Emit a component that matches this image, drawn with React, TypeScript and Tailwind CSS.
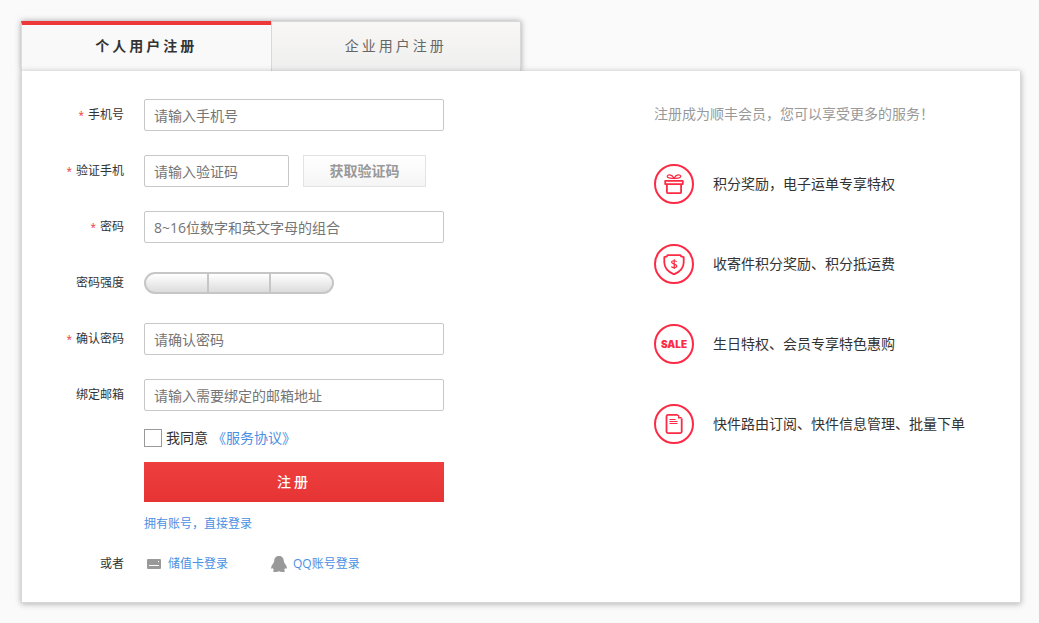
import type { ReactNode } from "react";

const fieldClass =
  "h-8 w-full rounded-[2px] border border-[#c8c8c8] bg-white px-[9px] text-sm text-[#333] outline-none placeholder:text-[#757575] placeholder:opacity-100 focus:border-[#999]";

const linkClass = "text-[#4a90e2] hover:underline";

type RowProps = {
  label: string;
  htmlFor?: string;
  required?: boolean;
  children: ReactNode;
};

function Row({ label, htmlFor, required, children }: RowProps) {
  return (
    <div className="flex h-8 items-center gap-5">
      <label
        htmlFor={htmlFor}
        className="w-[102px] shrink-0 text-right text-xs text-[#333]"
      >
        {required && <span className="mr-1 text-[10px] text-[#f0323c]">*</span>}
        {label}
      </label>
      {children}
    </div>
  );
}

function GiftIcon() {
  return (
    <svg viewBox="0 0 20 20" className="size-5" fill="none" stroke="#fc2a44">
      <path strokeWidth="1.2" d="M10 4.2C8 4.4 3.4 4.6 3.2 2.4 3.3.2 7.8 0 10 4.2C12.200 0 16.700.2 16.800 2.400 16.600 4.600 12 4.400 10 4.200" />
      <path strokeWidth="1.800" strokeLinejoin="round" d="M1.200 6.900h17.600v3.200H1.200zM2.900 10.300v7.900q0 .900.900.900h12.400q.900 0 .900-.900v-7.900" />
    </svg>
  );
}

function ShieldIcon() {
  return (
    <svg viewBox="0 0 22 22" className="size-[22px]" fill="none" stroke="#fc2a44">
      <path
        strokeWidth="1.800"
        strokeLinejoin="round"
        d="M4.500 2.100h13l.600 1.200 2.600.900v5.200c0 5.500-4.600 9.600-9.700 12C5.900 19 1.300 14.900 1.300 9.400V4.200l2.600-.900z"
      />
      <path
        strokeWidth="1.200"
        d="M13.600 8.900C13 7.400 8.600 7.200 8.600 9.300c0 2.200 5.200 1.400 5.200 3.800 0 2.100-4.700 2-5.400.400M11.200 6.300v9.800"
      />
    </svg>
  );
}

function DocumentIcon() {
  return (
    <svg viewBox="0 0 20 22" className="h-[22px] w-5" fill="none" stroke="#fc2a44">
      <path
        strokeWidth="1.800"
        strokeLinejoin="round"
        d="M13.500 1.900H4q-1.500 0-1.500 1.500v15.200q0 1.500 1.500 1.500h12.200q1.500 0 1.500-1.500V5.500"
      />
      <path strokeWidth="1.200" d="M5.500 6.500h6M5.500 8.500h8M5.500 10.500h8" />
      <path strokeWidth="1.400" d="M13.300 1.900l1.400.900v2h3" />
    </svg>
  );
}

const benefits: { text: string; icon: ReactNode }[] = [
  { text: "积分奖励，电子运单专享特权", icon: <GiftIcon /> },
  { text: "收寄件积分奖励、积分抵运费", icon: <ShieldIcon /> },
  {
    text: "生日特权、会员专享特色惠购",
    icon: (
      <span className="font-[Inter,sans-serif] text-[10px] leading-none font-black text-[#fc2a44]">
        SALE
      </span>
    ),
  },
  { text: "快件路由订阅、快件信息管理、批量下单", icon: <DocumentIcon /> },
];

export default function App() {
  return (
    <main
      lang="zh-CN"
      className="min-h-screen bg-[#fafafa] pt-[21px] pr-[18px] pb-[18px] pl-[21px] font-['Open_Sans','Noto_Sans_CJK_SC',sans-serif] text-[#333]"
    >
      <div
        role="tablist"
        className="flex w-[500px] max-w-full shadow-[0_0_6px_rgba(0,0,0,0.35)]"
      >
        <button
          type="button"
          role="tab"
          aria-selected="true"
          className="h-[50px] flex-1 border-t-4 border-l border-t-[#ec3838] border-l-[#ddd] bg-[#f9f9f9] pb-[5px] text-sm font-bold tracking-[3px] text-[#333]"
        >
          个人用户注册
        </button>
        <button
          type="button"
          role="tab"
          aria-selected="false"
          className="h-[50px] flex-1 border border-b-0 border-[#d8d8d8] bg-linear-to-b from-[#f8f7f5] to-[#efefef] pb-[2px] text-sm tracking-[3px] text-[#666]"
        >
          企业用户注册
        </button>
      </div>

      <section className="relative grid grid-cols-[minmax(0,632px)_1fr] border border-t-0 border-[#d8d8d8] bg-white pt-7 pb-7 shadow-[0_1px_6px_rgba(0,0,0,0.3)]">
        <form onSubmit={(e) => e.preventDefault()}>
          <div className="flex flex-col gap-6">
            <Row label="手机号" htmlFor="phone" required>
              <div className="w-[300px]">
                <input id="phone" type="tel" placeholder="请输入手机号" className={fieldClass} />
              </div>
            </Row>
            <Row label="验证手机" htmlFor="code" required>
              <div className="flex gap-[14px]">
                <div className="w-[145px]">
                  <input id="code" type="text" placeholder="请输入验证码" className={fieldClass} />
                </div>
                <button
                  type="button"
                  className="h-8 w-[123px] border border-[#e3e3e3] bg-linear-to-b from-white to-[#f5f5f5] text-sm font-bold text-[#999]"
                >
                  获取验证码
                </button>
              </div>
            </Row>
            <Row label="密码" htmlFor="password" required>
              <div className="w-[300px]">
                <input
                  id="password"
                  type="password"
                  placeholder="8~16位数字和英文字母的组合"
                  className={fieldClass}
                />
              </div>
            </Row>
            <Row label="密码强度">
              <div className="flex h-[22px] w-[190px] gap-[2px] overflow-hidden rounded-full border-2 border-[#c6c6c6] bg-[#c6c6c6]">
                <span className="flex-1 bg-linear-to-b from-white to-[#dcdcdc]" />
                <span className="flex-1 bg-linear-to-b from-white to-[#dcdcdc]" />
                <span className="flex-1 bg-linear-to-b from-white to-[#dcdcdc]" />
              </div>
            </Row>
            <Row label="确认密码" htmlFor="confirm" required>
              <div className="w-[300px]">
                <input
                  id="confirm"
                  type="password"
                  placeholder="请确认密码"
                  className={fieldClass}
                />
              </div>
            </Row>
            <Row label="绑定邮箱" htmlFor="email">
              <div className="w-[300px]">
                <input
                  id="email"
                  type="email"
                  placeholder="请输入需要绑定的邮箱地址"
                  className={fieldClass}
                />
              </div>
            </Row>
          </div>

          <div className="ml-[122px] w-[300px]">
            <div className="mt-[17px] flex h-5 items-center gap-1 text-sm">
              <input
                id="agree"
                type="checkbox"
                className="size-[18px] appearance-none border border-[#999] bg-white checked:bg-[#ec3838]"
              />
              <label htmlFor="agree">我同意</label>
              <a href="#terms" className={linkClass}>
                《服务协议》
              </a>
            </div>
            <button
              type="submit"
              className="mt-[14px] block h-10 w-full bg-linear-to-b from-[#ee3e3e] to-[#e63434] text-sm font-medium tracking-[3px] text-white"
            >
              注册
            </button>
            <div className="mt-3 flex h-5 items-center text-xs">
              <a href="#login" className={linkClass}>
                拥有账号，直接登录
              </a>
            </div>
          </div>

          <div className="mt-5 flex h-5 items-center gap-5 text-xs">
            <span className="w-[102px] shrink-0 text-right">或者</span>
            <div className="flex items-center gap-[43px]">
              <a href="#card" className={`flex items-center gap-[7px] pl-[3px] ${linkClass}`}>
                <svg viewBox="0 0 14 10" className="h-[10px] w-[14px]">
                  <rect width="14" height="10" rx="1" fill="#999" />
                  <path d="M2 6.500h10M11 2.500h1" stroke="#fff" />
                </svg>
                储值卡登录
              </a>
              <a href="#qq" className={`flex items-center gap-[6px] ${linkClass}`}>
                <svg viewBox="0 0 16 16" className="size-4" fill="#999">
                  <path d="M8 0C5 0 3.200 2.100 3.200 5c0 .700-.400 1.200-.700 1.900C1.300 8.500 0 10.200.200 12.200c.200.900 1 .500 1.600-.300.200.900.700 1.600 1.300 2.200-.700.300-1.200.700-1.100 1.200.300 1 4.200.900 6 0 1.800.900 5.700 1 6 0 .100-.500-.400-.900-1.100-1.200.600-.600 1.100-1.300 1.300-2.200.600.800 1.400 1.200 1.600.300.200-2-1.100-3.700-2.300-5.300-.300-.700-.700-1.200-.700-1.900C12.800 2.100 11 0 8 0z" />
                </svg>
                QQ账号登录
              </a>
            </div>
          </div>
        </form>

        <aside className="flex flex-col text-sm">
          <p className="h-8 leading-[30px] text-[#999]">
            注册成为顺丰会员，您可以享受更多的服务！
          </p>
          <ul className="mt-[33px] flex flex-col gap-10">
            {benefits.map((item) => (
              <li key={item.text} className="flex h-10 items-center gap-[19px]">
                <span className="flex size-10 shrink-0 items-center justify-center rounded-full border-2 border-[#fc2a44]">
                  {item.icon}
                </span>
                <span>{item.text}</span>
              </li>
            ))}
          </ul>
        </aside>
      </section>
    </main>
  );
}
